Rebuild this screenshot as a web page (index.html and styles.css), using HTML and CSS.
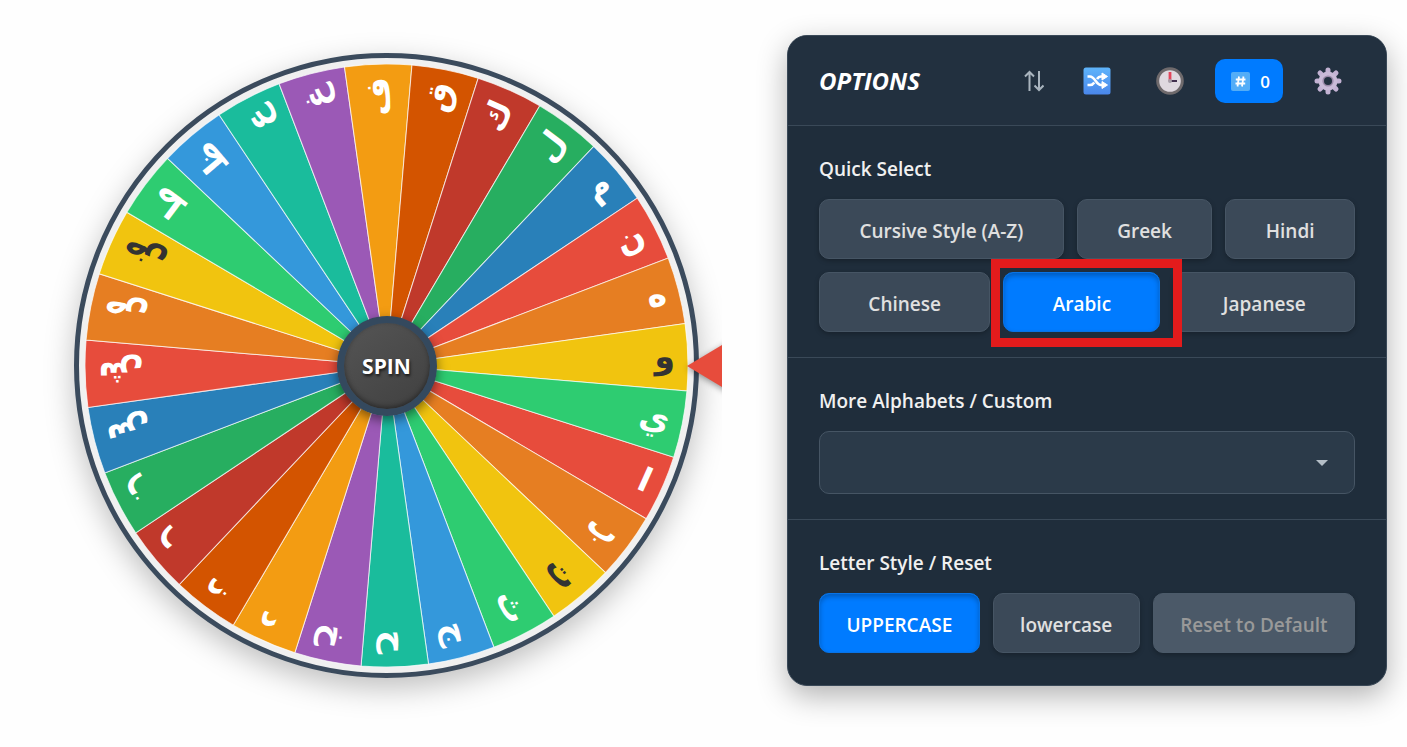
FILE: index.html
```html
<!DOCTYPE html>
<html lang="en">

<head>
    <meta charset="utf-8">
    <meta name="viewport" content="width=device-width, initial-scale=1.0">
    <title>Alphabet Wheel</title>
    <link rel="stylesheet" href="styles.css">
</head>

<body>
    <main class="page">
        <section class="stage">
            <div class="wheel">
                <svg class="slices" viewBox="-300 -300 600 600"></svg>
                <button class="spin">SPIN</button>
                <div class="pointer"></div>
            </div>
        </section>

        <aside class="panel">
            <header class="panel-header">
                <h2>OPTIONS</h2>
                <nav class="tools">
                    <button class="tool narrow" aria-label="Sort">
                        <svg width="20" height="28" viewBox="0 0 20 28" fill="none" stroke="#a9b4be" stroke-width="2">
                            <path d="M5.500 24V5M1 9.500L5.500 5L10 9.500M15 4V23M10.500 18.500L15 23L19.500 18.500" />
                        </svg>
                    </button>
                    <button class="tool" aria-label="Shuffle">
                        <svg width="28" height="28" viewBox="0 0 28 28">
                            <defs>
                                <linearGradient id="blue" x1="0" y1="0" x2="0" y2="1">
                                    <stop offset="0" stop-color="#5eb4fb" />
                                    <stop offset="1" stop-color="#4a86ea" />
                                </linearGradient>
                            </defs>
                            <rect x="0.500" y="0.500" width="27" height="27" rx="2.500" fill="url(#blue)" />
                            <path d="M4.500 9.500H7C12 9.500 13 18 18 18H20M4.500 18H7C9 18 10.300 17 11.300 15.500M14 12C15 10.500 16.200 9.500 18 9.500H20" fill="none" stroke="#fff" stroke-width="2.600" />
                            <path d="M19 6L24.500 9.500L19 13ZM19 14.500L24.500 18L19 21.500Z" fill="#fff" stroke="#fff" stroke-linejoin="round" />
                        </svg>
                    </button>
                    <button class="tool" aria-label="Timer">
                        <svg width="28" height="28" viewBox="0 0 28 28">
                            <circle cx="14" cy="14" r="12.300" fill="#dfd9e0" stroke="#6f6a6c" stroke-width="3" />
                            <path d="M14 14V5" stroke="#e2455b" stroke-width="2.800" />
                            <path d="M14 14H21" stroke="#42304f" stroke-width="2" />
                            <circle cx="14" cy="14" r="2" fill="#a59ea8" />
                        </svg>
                    </button>
                    <button class="tool counter">
                        <svg width="19" height="19" viewBox="0 0 19 19">
                            <rect width="19" height="19" rx="2" fill="#53adf7" />
                            <path d="M8 4.500L6.500 14.500M12.500 4.500L11 14.500M4.800 7.500H14.500M4.500 11.500H14.200" stroke="#fff" stroke-width="1.800" />
                        </svg>
                        0
                    </button>
                    <button class="tool" aria-label="Settings">
                        <svg width="28" height="28" viewBox="-14 -14 28 28">
                            <g stroke="#c3b2d3" stroke-width="5" stroke-linecap="round">
                                <path d="M0 -11V11M-11 0H11M-8 -8L8 8M-8 8L8 -8" />
                            </g>
                            <circle r="9.500" fill="#c9bad7" />
                            <circle r="5.600" fill="#9b8aa9" />
                            <circle r="4" fill="#22303f" />
                        </svg>
                    </button>
                </nav>
            </header>

            <section class="group">
                <h3>Quick Select</h3>
                <div class="buttons">
                    <button class="option">Cursive Style (A-Z)</button>
                    <button class="option">Greek</button>
                    <button class="option">Hindi</button>
                    <button class="option">Chinese</button>
                    <button class="option active marked">Arabic</button>
                    <button class="option">Japanese</button>
                </div>
            </section>

            <section class="group">
                <h3><label for="alphabet">More Alphabets / Custom</label></h3>
                <div class="select-box">
                    <select id="alphabet"></select>
                    <svg class="caret" width="12" height="6" viewBox="0 0 12 6">
                        <path d="M0 0H12L6 6Z" fill="#b4bec7" />
                    </svg>
                </div>
            </section>

            <section class="group">
                <h3>Letter Style / Reset</h3>
                <div class="buttons">
                    <button class="option active">UPPERCASE</button>
                    <button class="option">lowercase</button>
                    <button class="option" disabled>Reset to Default</button>
                </div>
            </section>
        </aside>
    </main>

    <script src="wheel.js"></script>
</body>

</html>
```
FILE: styles.css
```css
* {
    box-sizing: border-box;
}

body {
    margin: 0;
    background-color: #fefefe;
    font-family: "Open Sans", "Noto Sans", sans-serif;
}

button {
    font-family: inherit;
    cursor: pointer;
}

.page {
    display: grid;
    grid-template-columns: 722fr 600fr;
    column-gap: 65px;
    align-items: start;
    padding-right: 20px;
}

/* wheel */

.stage {
    min-height: 100vh;
    padding: 53px 23px 0 74px;
    overflow: hidden;
}

.wheel {
    position: relative;
    aspect-ratio: 1;
    padding: 6px;
    border: 5px solid #3b4b5d;
    border-radius: 50%;
    background-color: #f0f0f0;
    box-shadow: 0 10px 30px rgba(0, 0, 0, 0.25);
}

.slices {
    display: block;
    width: 100%;
}

.slices path {
    stroke: rgba(255, 255, 255, 0.7);
    stroke-width: 1;
}

.slices text {
    font-family: "DejaVu Sans", sans-serif;
    font-size: 33px;
    font-weight: bold;
    text-anchor: end;
    fill: #fff;
}

.slices .dark {
    fill: #333;
}

.spin {
    position: absolute;
    top: 50%;
    left: 50%;
    width: 100px;
    height: 100px;
    transform: translate(-50%, -50%);
    padding: 0;
    border: 7px solid #34495e;
    border-radius: 50%;
    background: linear-gradient(145deg, #555, #404040);
    box-shadow: 0 4px 12px rgba(0, 0, 0, 0.5), inset 0 -2px 5px rgba(0, 0, 0, 0.4);
    color: #fff;
    font-size: 21px;
    font-weight: bold;
    text-shadow: 1px 2px 3px rgba(0, 0, 0, 0.7);
}

.pointer {
    position: absolute;
    top: 50%;
    right: -43px;
    transform: translateY(-50%);
    border-top: 30px solid transparent;
    border-bottom: 30px solid transparent;
    border-right: 50px solid #e74c3c;
    filter: drop-shadow(0 2px 3px rgba(0, 0, 0, 0.4));
}

/* options panel */

.panel {
    margin-top: 35px;
    border: 1px solid #3a4958;
    border-radius: 20px;
    background-color: #1f2d3b;
    box-shadow: 0 10px 30px rgba(0, 0, 0, 0.3);
    color: #f0f0f0;
}

.panel-header {
    display: flex;
    align-items: center;
    justify-content: space-between;
    padding: 23px 30px 22px 31px;
    border-bottom: 1px solid #3a4958;
    border-radius: 19px 19px 0 0;
    background-color: #22303f;
}

.panel-header h2 {
    margin: 0;
    color: #fff;
    font-size: 24px;
    font-style: italic;
    font-weight: bold;
    line-height: 32px;
}

.tools {
    display: flex;
    gap: 17px;
}

.tool {
    display: flex;
    align-items: center;
    height: 44px;
    padding: 0 14px;
    border: none;
    border-radius: 10px;
    background: none;
}

.tool.narrow {
    padding: 0 8px;
}

.tool.counter {
    gap: 10px;
    padding: 0 13px 0 16px;
    background-color: #007bff;
    color: #fff;
    font-size: 17px;
    font-weight: 600;
}

.group {
    padding: 30px 31px 25px;
    border-bottom: 1px solid #3a4958;
}

.group:last-child {
    padding-bottom: 32px;
    border-bottom: none;
}

.group h3 {
    margin: 0 0 16px;
    font-size: 19px;
    font-weight: 600;
    line-height: 27px;
}

.buttons {
    display: flex;
    flex-wrap: wrap;
    gap: 13px;
}

.option {
    position: relative;
    flex: 1 1 auto;
    height: 60px;
    padding: 3px 24px 0;
    border: 1px solid #465564;
    border-radius: 10px;
    background-color: #3b4958;
    box-shadow: 0 2px 5px rgba(0, 0, 0, 0.25);
    color: #e0e0e0;
    font-size: 19px;
    font-weight: 600;
}

.option.active {
    border-color: #0873e6;
    background-color: #007bff;
    box-shadow: inset 0 3px 5px rgba(0, 0, 0, 0.25);
    color: #fff;
}

.option:disabled {
    border-color: #4b5a69;
    background-color: #4b5968;
    color: #999;
}

/* red frame round the chosen alphabet */
.marked::after {
    content: "";
    position: absolute;
    z-index: 1;
    top: -14px;
    right: -23px;
    bottom: -16px;
    left: -13px;
    border: 9px solid #e31b1c;
    pointer-events: none;
}

.marked {
    z-index: 1;
}

.select-box {
    position: relative;
}

.select-box select {
    display: block;
    width: 100%;
    height: 63px;
    padding: 0 24px;
    border: 1px solid #465564;
    border-radius: 10px;
    appearance: none;
    background-color: #2b3a49;
    color: #e0e0e0;
    font: inherit;
}

.caret {
    position: absolute;
    top: 29px;
    right: 27px;
    pointer-events: none;
}
```
FILE: wheel.js
```js
const letters = ["ا", "ب", "ت", "ث", "ج", "ح", "خ", "د", "ذ", "ر", "ز", "س", "ش", "ص",
    "ض", "ط", "ظ", "ع", "غ", "ف", "ق", "ك", "ل", "م", "ن", "ه", "و", "ي"];
const colors = ["#e74c3c", "#e67e22", "#f1c40f", "#2ecc71", "#3498db", "#1abc9c",
    "#9b59b6", "#f39c12", "#d35400", "#c0392b", "#27ae60", "#2980b9"];

const svgns = "http://www.w3.org/2000/svg";
const radius = 300;
const startAngle = 17.7;
const slice = 360 / letters.length;

function point(angle) {
    const rad = angle * Math.PI / 180;
    return (radius * Math.cos(rad)).toFixed(2) + " " + (radius * Math.sin(rad)).toFixed(2);
}

function drawWheel() {
    const svg = document.querySelector(".slices");

    letters.forEach((letter, i) => {
        const from = startAngle + i * slice;
        const color = colors[i % colors.length];

        const path = document.createElementNS(svgns, "path");
        path.setAttribute("d", `M0 0L${point(from)}A${radius} ${radius} 0 0 1 ${point(from + slice)}Z`);
        path.setAttribute("fill", color);
        svg.appendChild(path);

        const text = document.createElementNS(svgns, "text");
        text.setAttribute("x", radius - 13);
        text.setAttribute("y", 10);
        text.setAttribute("transform", `rotate(${from + slice / 2})`);
        text.textContent = letter;
        // white is hard to read on yellow
        if (color === "#f1c40f") {
            text.classList.add("dark");
        }
        svg.appendChild(text);
    });
}

drawWheel();
```
